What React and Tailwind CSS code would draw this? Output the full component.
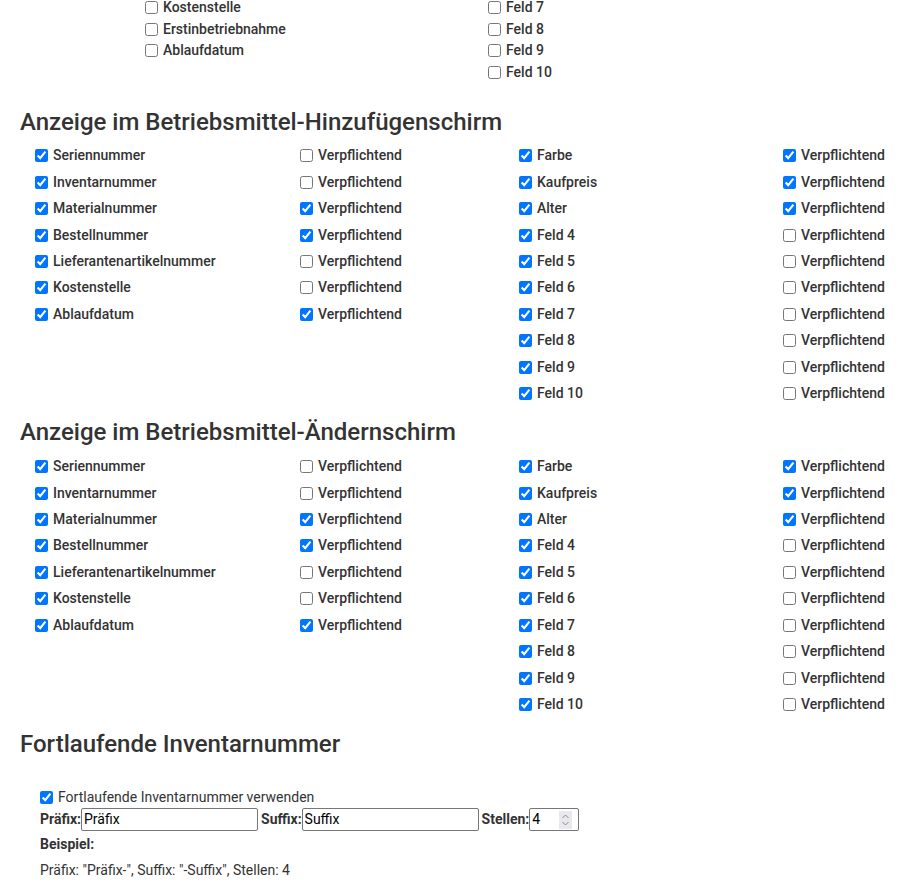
import { useState } from 'react';

const leftFields = [
  ['Seriennummer', false],
  ['Inventarnummer', false],
  ['Materialnummer', true],
  ['Bestellnummer', true],
  ['Lieferantenartikelnummer', false],
  ['Kostenstelle', false],
  ['Ablaufdatum', true],
];

const rightFields = [
  ['Farbe', true],
  ['Kaufpreis', true],
  ['Alter', true],
  ['Feld 4', false],
  ['Feld 5', false],
  ['Feld 6', false],
  ['Feld 7', false],
  ['Feld 8', false],
  ['Feld 9', false],
  ['Feld 10', false],
];

function Check({ label, checked, bold = true, className = '' }) {
  const [on, setOn] = useState(checked);
  return (
    <label className={`flex items-center ${className}`}>
      <input
        type="checkbox"
        checked={on}
        onChange={() => setOn(!on)}
        className="w-[13px] h-[13px] shrink-0"
      />
      <span className={`ml-[5px] text-[14px] text-[#333] ${bold ? 'font-medium' : ''}`}>{label}</span>
    </label>
  );
}

function FieldGrid() {
  const rows = [];
  for (let i = 0; i < 10; i++) {
    const l = leftFields[i];
    const r = rightFields[i];
    rows.push(
      <div key={'a' + i} className="h-[26.44px] flex items-center">
        {l && <Check label={l[0]} checked />}
      </div>,
      <div key={'b' + i} className="h-[26.44px] flex items-center">
        {l && <Check label="Verpflichtend" checked={l[1]} />}
      </div>,
      <div key={'c' + i} className="h-[26.44px] flex items-center">
        <Check label={r[0]} checked />
      </div>,
      <div key={'d' + i} className="h-[26.44px] flex items-center">
        <Check label="Verpflichtend" checked={r[1]} />
      </div>
    );
  }
  return <div className="grid grid-cols-[265px_219px_264px_1fr] pl-[35px]">{rows}</div>;
}

export default function App() {
  const top = [
    ['Kostenstelle', 'Feld 7'],
    ['Erstinbetriebnahme', 'Feld 8'],
    ['Ablaufdatum', 'Feld 9'],
    [null, 'Feld 10'],
  ];

  return (
    <div className="font-['Roboto',sans-serif] text-[#333] bg-white min-h-[892px] overflow-hidden">
      <div className="-mt-[3px] grid grid-cols-[343px_1fr] pl-[145px]">
        {top.map(([a, b], i) => (
          <div key={i} className="contents">
            <div className="h-[21.5px] flex items-center">{a && <Check label={a} checked={false} />}</div>
            <div className="h-[21.5px] flex items-center">{b && <Check label={b} checked={false} />}</div>
          </div>
        ))}
      </div>

      <h2 className="mt-[25px] pl-[20px] text-[24px] leading-[29px] font-medium">Anzeige im Betriebsmittel-Hinzufügenschirm</h2>
      <div className="mt-[5.5px]">
        <FieldGrid />
      </div>

      <h2 className="mt-[11.5px] pl-[20px] text-[24px] leading-[29px] font-medium">Anzeige im Betriebsmittel-Ändernschirm</h2>
      <div className="mt-[6px]">
        <FieldGrid />
      </div>

      <h2 className="mt-[12px] pl-[20px] text-[24px] leading-[29px] font-medium">Fortlaufende Inventarnummer</h2>

      <div className="pl-[40px] mt-[29px] text-[14px]">
        <div className="h-[20px] flex items-center">
          <Check label="Fortlaufende Inventarnummer verwenden" checked bold={false} />
        </div>
        <div className="flex items-center h-[23px]">
          <span className="font-bold">Präfix:</span>
          <input
            type="text"
            defaultValue="Präfix"
            className="w-[177px] h-[23px] border border-[#767676] rounded-[2px] px-[2px] text-[14px] text-black"
          />
          <span className="ml-[3px] font-bold">Suffix:</span>
          <input
            type="text"
            defaultValue="Suffix"
            className="w-[177px] h-[23px] border border-[#767676] rounded-[2px] px-[2px] text-[14px] text-black"
          />
          <span className="ml-[3px] font-bold">Stellen:</span>
          <div className="relative">
            <input
              type="text"
              defaultValue="4"
              className="w-[50px] h-[23px] border border-[#767676] rounded-[2px] pl-[2px] pr-[20px] text-[14px] text-black"
            />
            <div className="absolute left-[30px] top-[3px] w-[13px] h-[18px] bg-[#e9e9ed] flex items-center justify-center">
              <svg width="9" height="14" viewBox="0 0 9 14" fill="none" stroke="#8a8a8a" strokeWidth="1">
                <path d="M1.5 5 L4.5 2 L7.5 5" />
                <path d="M1.5 9 L4.5 12 L7.5 9" />
              </svg>
            </div>
          </div>
        </div>
        <div className="mt-[4px] h-[20px] flex items-center font-bold">Beispiel:</div>
        <div className="mt-[6px] h-[20px] flex items-center">Präfix: "Präfix-", Suffix: "-Suffix", Stellen: 4</div>
      </div>
    </div>
  );
}
